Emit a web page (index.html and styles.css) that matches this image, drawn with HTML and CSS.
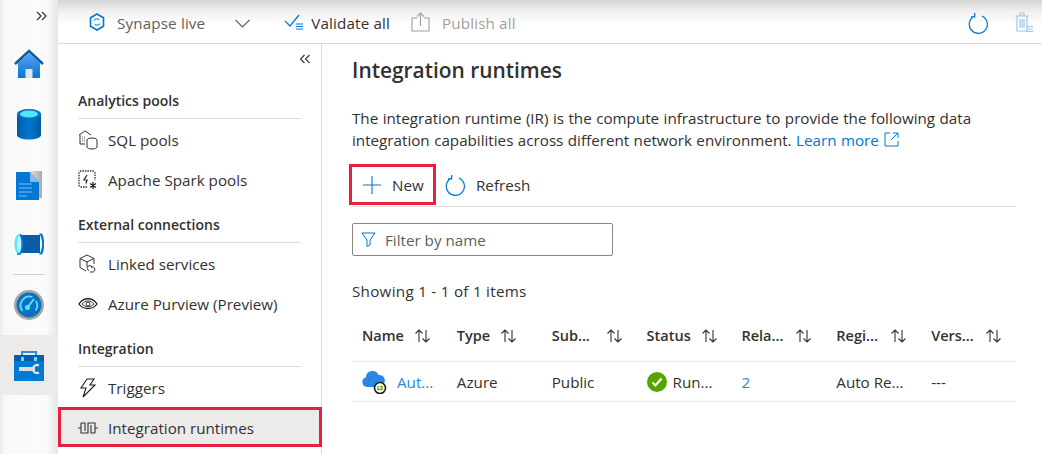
FILE: index.html
```html
<!DOCTYPE html>
<html lang="en">
<head>
  <meta charset="UTF-8" />
  <title>Integration runtimes</title>
  <link rel="stylesheet" href="styles.css">
</head>
<body>
  <svg class="defs" width="0" height="0">
    <defs>
      <linearGradient id="blueV" x1="0" y1="0" x2="0" y2="1"><stop offset="0" stop-color="#5ea0ef"/><stop offset="1" stop-color="#0078d4"/></linearGradient>
      <linearGradient id="blueH" x1="0" y1="0" x2="1" y2="0"><stop offset="0" stop-color="#005ba1"/><stop offset=".5" stop-color="#0078d4"/><stop offset="1" stop-color="#005ba1"/></linearGradient>
      <linearGradient id="grayH" x1="0" y1="0" x2="1" y2="0"><stop offset="0" stop-color="#f0f0f0"/><stop offset="1" stop-color="#a8a8a8"/></linearGradient>
      <symbol id="sort" viewBox="0 0 18 16"><path d="M5 14V2M1.500 5.500 5 2l3.500 3.500M12 2v12M8.500 10.500 12 14l3.500-3.500" fill="none" stroke="#323130" stroke-width="1.100"/></symbol>
      <symbol id="refresh" viewBox="0 0 22 24"><path d="M14.500 4.200A9.500 9.500 0 1 1 6.500 4.500M7 1v4H3" fill="none" stroke="#0078d4" stroke-width="1.300" transform="translate(0 1)"/></symbol>
    </defs>
  </svg>

  <!-- Left rail -->
  <nav class="rail">
    <div class="rail-expand">
      <svg width="12" height="10" viewBox="0 0 12 10"><path d="M1 1l4 4-4 4M6 1l4 4-4 4" fill="none" stroke="#323130" stroke-width="1.200"/></svg>
    </div>
    <div class="rail-item rail-home">
      <svg width="30" height="30" viewBox="0 0 30 30"><path d="M4 14 15 4l11 10v15H4z" fill="url(#blueV)"/><path d="M1 15 15 2l14 13" fill="none" stroke="#0a5a9e" stroke-width="2.400"/><rect x="11.500" y="20" width="7" height="9" fill="#dfe3e6"/></svg>
    </div>
    <div class="rail-item rail-db">
      <svg width="24" height="32" viewBox="0 0 24 32"><path d="M0 6v21c0 2.500 5.400 4.500 12 4.500S24 29.500 24 27V6z" fill="url(#blueH)"/><ellipse cx="12" cy="6" rx="12" ry="5" fill="#0a6fc2"/><ellipse cx="12" cy="6" rx="9" ry="3.500" fill="#50e6ff"/></svg>
    </div>
    <div class="rail-item rail-doc">
      <svg width="26" height="29" viewBox="0 0 26 29"><rect x="12" y="0" width="14" height="27" fill="url(#grayH)"/><path d="M0 1h14l9 10v18H0z" fill="#0078d4"/><path d="M14 1l9 10h-9z" fill="#83b9f9"/><path d="M3 13h13M3 17h13M3 21h13M3 25h8" stroke="#83b9f9" stroke-width="1.200"/></svg>
    </div>
    <div class="rail-item rail-pipe">
      <svg width="30" height="22" viewBox="0 0 30 22"><rect x="4" y="2" width="22" height="18" fill="#0a5ea8"/><ellipse cx="4.500" cy="11" rx="4" ry="9.500" fill="#50e6ff"/><ellipse cx="5" cy="11" rx="2.200" ry="8" fill="#c3f1ff"/><path d="M6 1c3 4 3 16 0 20h-3" fill="none" stroke="#0078d4" stroke-width="1.500"/><path d="M25 .5c4 4 4 17 0 21h3c3-5 3-16 0-21z" fill="#0078d4"/></svg>
    </div>
    <div class="rail-sep"></div>
    <div class="rail-item">
      <svg width="30" height="30" viewBox="0 0 30 30"><circle cx="15" cy="15" r="15" fill="#a6a6a6"/><circle cx="15" cy="15" r="12.500" fill="#0f70c4"/><path d="M8.500 21a9 9 0 0 1 10-14" fill="none" stroke="#50e6ff" stroke-width="1.800"/><path d="M22 11a9 9 0 0 1-.500 9.500" fill="none" stroke="#50e6ff" stroke-width="1.800"/><path d="M13 18l7-9" stroke="#50e6ff" stroke-width="2"/><circle cx="13.500" cy="17.500" r="2.500" fill="#50e6ff"/></svg>
    </div>
    <div class="rail-item rail-active">
      <svg width="30" height="31" viewBox="0 0 30 31"><path d="M8 7V2h14v5" fill="none" stroke="#2f8be0" stroke-width="2"/><rect x="0" y="5" width="30" height="26" fill="#0078d4"/><rect x="0" y="5" width="30" height="6" fill="#0a5ea8"/><rect x="7" y="7" width="3" height="4" fill="#50e6ff"/><rect x="20" y="7" width="3" height="4" fill="#50e6ff"/><path d="M5 19h16" stroke="#e1dfdd" stroke-width="4"/><path d="M25 15.500a4 4 0 1 0 0 7" fill="none" stroke="#e1dfdd" stroke-width="2.200"/></svg>
    </div>
  </nav>

  <div class="page">
    <!-- Top command bar -->
    <header class="topbar">
      <div class="topbar-mode">
        <svg width="16" height="18" viewBox="0 0 16 18"><path d="M8 1l6.500 3.700v8.600L8 17l-6.500-3.700V4.700z" fill="none" stroke="#0078d4" stroke-width="1.600"/><path d="M5 7.500c1-2 4-2 5.500-.8M11 10.500c-1 2-4 2-5.500.8" fill="none" stroke="#50b0e8" stroke-width="1.500"/></svg>
        <span>Synapse live</span>
        <svg class="mode-chevron" width="15" height="9" viewBox="0 0 15 9"><path d="M.5 1l7 7 7-7" fill="none" stroke="#605e5c" stroke-width="1.100"/></svg>
      </div>
      <div class="top-btn">
        <svg width="20" height="16" viewBox="0 0 20 16"><path d="M1 7l5 5L15 1" fill="none" stroke="#0078d4" stroke-width="1.200"/><path d="M12 10h7M12 12.500h7M12 15h7" stroke="#0078d4" stroke-width="1.200"/></svg>
        <span>Validate all</span>
      </div>
      <div class="top-btn top-btn-off">
        <svg width="19" height="20" viewBox="0 0 19 20"><path d="M6 6H1v13h17V6h-5M9.500 14V1M6 4.500 9.500 1 13 4.500" fill="none" stroke="#a19f9d" stroke-width="1.100"/></svg>
        <span>Publish all</span>
      </div>
      <div class="top-right">
        <svg width="21" height="23"><use href="#refresh"/></svg>
        <svg width="18" height="21" viewBox="0 0 18 21"><path d="M0 4h14M5 4V1h4v3M2 4v15h10V4M5 7v9M7 7v9M9 7v9" fill="none" stroke="#9cc8ea" stroke-width="1.200"/><path d="M11 14.500h7M11 17h7M11 19.500h7" stroke="#9cc8ea" stroke-width="1.200"/></svg>
      </div>
    </header>

    <div class="workspace">
      <!-- Manage sidebar -->
      <aside class="sidebar">
        <div class="collapse">
          <svg width="12" height="10" viewBox="0 0 12 10"><path d="M5.500 1l-4 4 4 4M10.500 1l-4 4 4 4" fill="none" stroke="#323130" stroke-width="1.100"/></svg>
        </div>

        <h3 class="group-title">Analytics pools</h3>
        <a class="side-item">
          <svg width="20" height="20" viewBox="0 0 20 20"><path d="M1 5l6-4 6 4M2 5v9h5" fill="none" stroke="#323130"/><path d="M4 7h1M6 7h1M4 9h1M6 9h1M4 11h1M6 11h1" stroke="#605e5c"/><ellipse cx="14" cy="10" rx="5" ry="2" fill="#fff" stroke="#323130"/><path d="M9 10v7c0 1 2 2 5 2s5-1 5-2v-7" fill="#fff" stroke="#323130"/></svg>
          <span>SQL pools</span>
        </a>
        <a class="side-item">
          <svg width="20" height="20" viewBox="0 0 20 20"><path d="M9 17H3a2 2 0 0 1-2-2V3a2 2 0 0 1 2-2h12a2 2 0 0 1 2 2v7" fill="none" stroke="#323130" stroke-width="1.300" stroke-dasharray="1.500 1"/><path d="M9 5 6 10h3l-1 3.500" fill="none" stroke="#201f1e" stroke-width="1.200"/><path d="M15 12v7M12 13.500l6 4M18 13.500l-6 4" stroke="#201f1e" stroke-width="1.300"/></svg>
          <span>Apache Spark pools</span>
        </a>

        <h3 class="group-title">External connections</h3>
        <a class="side-item">
          <svg width="20" height="20" viewBox="0 0 20 20"><path d="M9 1l7 3.500V10M9 1 2 4.500v9L8 17M2 4.500 9 8l7-3.500M9 8v5" fill="none" stroke="#323130"/><path d="M14 13a2.500 2.500 0 1 0-3 3.500M13 13.500a2.500 2.500 0 1 1 1 4.500h-2" fill="none" stroke="#323130"/></svg>
          <span>Linked services</span>
        </a>
        <a class="side-item">
          <svg width="20" height="14" viewBox="0 0 20 14"><path d="M1 7c4-7 14-7 18 0-4 6-14 6-18 0z" fill="none" stroke="#201f1e" stroke-width="1.300"/><path d="M4 7c3-4 9-4 12 0-3 3.500-9 3.500-12 0z" fill="none" stroke="#323130"/><circle cx="10" cy="7" r="2" fill="none" stroke="#323130"/></svg>
          <span>Azure Purview (Preview)</span>
        </a>

        <h3 class="group-title">Integration</h3>
        <a class="side-item">
          <svg width="18" height="20" viewBox="0 0 18 20"><path d="M8 1h7l-4 6h5L4 19l3-9H2z" fill="none" stroke="#201f1e" stroke-width="1.100"/></svg>
          <span>Triggers</span>
        </a>
        <a class="side-item side-item-on">
          <svg width="20" height="14" viewBox="0 0 20 14"><path d="M0 7h3M17 7h3M3 2h4v8M3 2v10h7V5M17 12h-4V4M17 12V2h-7v3" fill="none" stroke="#323130" stroke-width="1.100"/></svg>
          <span>Integration runtimes</span>
        </a>
      </aside>

      <!-- Content -->
      <main class="content">
        <h1 class="title">Integration runtimes</h1>
        <p class="intro">The integration runtime (IR) is the compute infrastructure to provide the following data integration capabilities across different network environment. <a class="link">Learn more</a>
          <svg class="ext" width="15" height="15" viewBox="0 0 15 15"><path d="M6 1H1v13h13V9M9 1h5v5M14 1 7 8" fill="none" stroke="#0078d4"/></svg>
        </p>

        <div class="toolbar">
          <button class="tool tool-new">
            <svg width="20" height="20" viewBox="0 0 20 20"><path d="M10 1v18M1 10h18" stroke="#0078d4" stroke-width="1.100"/></svg>
            <span>New</span>
          </button>
          <button class="tool">
            <svg width="21" height="23"><use href="#refresh"/></svg>
            <span>Refresh</span>
          </button>
        </div>

        <div class="filter">
          <svg width="15" height="15" viewBox="0 0 15 15"><path d="M1 1h13L9 8v5l-3 1.500V8z" fill="none" stroke="#0078d4"/></svg>
          <span>Filter by name</span>
        </div>

        <p class="count">Showing 1 - 1 of 1 items</p>

        <div class="grid grid-head">
          <div class="cell"><span>Name</span><svg width="18" height="16"><use href="#sort"/></svg></div>
          <div class="cell"><span>Type</span><svg width="18" height="16"><use href="#sort"/></svg></div>
          <div class="cell"><span class="cut">Sub...</span><svg width="18" height="16"><use href="#sort"/></svg></div>
          <div class="cell"><span class="cut">Status</span><svg width="18" height="16"><use href="#sort"/></svg></div>
          <div class="cell"><span class="cut">Rela...</span><svg width="18" height="16"><use href="#sort"/></svg></div>
          <div class="cell"><span class="cut">Regi...</span><svg width="18" height="16"><use href="#sort"/></svg></div>
          <div class="cell"><span class="cut">Vers...</span><svg width="18" height="16"><use href="#sort"/></svg></div>
        </div>
        <div class="grid grid-row">
          <div class="cell cell-name">
            <svg width="25" height="24" viewBox="0 0 25 24"><path d="M5 17a5 5 0 0 1-1-9.800A6.500 6.500 0 0 1 16.500 5 5.500 5.500 0 0 1 18 16l-1 1z" fill="#2b88e0"/><circle cx="18" cy="18" r="5.500" fill="#fff" stroke="#201f1e" stroke-width="1.600"/><path d="M16 16v3.500h4v-3h-2" fill="none" stroke="#5db300" stroke-width="1.300"/></svg>
            <a class="link">Aut...</a>
          </div>
          <div class="cell">Azure</div>
          <div class="cell">Public</div>
          <div class="cell cell-status">
            <svg width="20" height="20" viewBox="0 0 20 20"><circle cx="10" cy="10" r="10" fill="#57a300"/><path d="M5.500 10.500 8.500 13.500 14.500 6.500" fill="none" stroke="#fff" stroke-width="2.200"/></svg>
            <span>Run...</span>
          </div>
          <div class="cell"><a class="link">2</a></div>
          <div class="cell">Auto Re...</div>
          <div class="cell">---</div>
        </div>
      </main>
    </div>
  </div>
</body>
</html>
```
FILE: styles.css
```css
/* Reset & basics */
* {
  box-sizing: border-box;
}
body {
  margin: 0;
  width: 1042px;
  height: 454px;
  overflow: hidden;
  display: flex;
  background: #fff;
  color: #323130;
  font-family: "Open Sans", "Noto Sans", sans-serif;
  font-size: 15.2px;
}
.defs {
  position: absolute;
}
svg {
  display: block;
  flex: none;
}

/* Left rail */
.rail {
  width: 58px;
  flex: none;
  display: flex;
  flex-direction: column;
  align-items: stretch;
  background: linear-gradient(90deg, #ececec 0, #f9f9f9 5px, #fbfbfb 46px, #e6e6e6 58px);
}
.rail-expand {
  height: 32px;
  display: flex;
  justify-content: flex-end;
  align-items: center;
  padding-right: 10px;
}
.rail-item {
  height: 60px;
  display: flex;
  justify-content: center;
  align-items: center;
}
.rail-home {
  height: 64px;
}
.rail-db {
  height: 55px;
}
.rail-doc {
  height: 68px;
}
.rail-pipe {
  height: 49px;
}
.rail-sep {
  height: 1px;
  margin: 6px 13px 0;
  background: #d2d0ce;
}
.rail-active {
  background: #edebe9;
}

/* Top command bar */
.page {
  flex: 1;
  min-width: 0;
  display: flex;
  flex-direction: column;
}
.topbar {
  height: 44px;
  flex: none;
  display: flex;
  align-items: center;
  padding: 1px 9px 0 31px;
  border-bottom: 1px solid #dddbd9;
  background: linear-gradient(180deg, #d6d6d6 0, #f1f1f1 12px, #fff 24px);
}
.topbar span {
  padding-top: 1px;
  letter-spacing: .15px;
}
.topbar-mode {
  display: flex;
  align-items: center;
  gap: 12px;
  color: #605e5c;
}
.mode-chevron {
  margin: 2px 34px 0 18px;
}
.top-btn {
  display: flex;
  align-items: center;
  gap: 7px;
  margin-right: 21px;
}
.top-btn-off {
  color: #a19f9d;
  gap: 12px;
}
.top-right {
  margin-left: auto;
  display: flex;
  align-items: center;
  gap: 26px;
}

/* Manage sidebar */
.workspace {
  flex: 1;
  display: flex;
  min-height: 0;
}
.sidebar {
  width: 264px;
  flex: none;
  border-right: 1px solid #dddbd9;
  padding-top: 10px;
}
.collapse {
  display: flex;
  justify-content: flex-end;
  padding-right: 10px;
  height: 21px;
}
.group-title {
  margin: 0 20px;
  height: 44px;
  display: flex;
  align-items: flex-end;
  padding-bottom: 8px;
  border-bottom: 1px solid #dddbd9;
  font-size: 14px;
  font-weight: 600;
}
.side-item {
  height: 40px;
  display: flex;
  align-items: center;
  gap: 10px;
  padding: 2px 0 0 20px;
}
.side-item svg {
  width: 20px;
}
.side-item-on {
  margin-right: -1px;
  background: #edebe9;
  outline: 3px solid #e81f3e;
  outline-offset: -3px;
}

/* Content */
.content {
  flex: 1;
  min-width: 0;
  padding: 0 26px 0 30px;
}
.title {
  margin: 12px 0 0;
  font-size: 20.9px;
  line-height: 28px;
  font-weight: 600;
}
.intro {
  margin: 23px 0 0;
  line-height: 22px;
  word-spacing: .5px;
}
.link {
  color: #0078d4;
}
.ext {
  display: inline-block;
  vertical-align: -1px;
  margin-left: 1px;
}
.toolbar {
  display: flex;
  align-items: flex-start;
  height: 43px;
  margin-top: 13px;
  border-bottom: 1px solid #dddbd9;
}
.tool {
  height: 41px;
  display: flex;
  align-items: center;
  gap: 10px;
  padding: 0 9px;
  border: 0;
  background: none;
  color: #323130;
  font: inherit;
}
.tool-new {
  width: 87px;
  margin-left: -3px;
  padding-left: 10px;
  border: 3px solid #e81f3e;
}
.filter {
  width: 261px;
  height: 33px;
  margin-top: 16px;
  display: flex;
  align-items: center;
  gap: 9px;
  padding-left: 8px;
  border: 1px solid #8a8886;
  border-radius: 2px;
  color: #605e5c;
}
.count {
  margin: 24px 0 0;
  line-height: 22px;
  letter-spacing: .28px;
}

/* Table */
.grid {
  display: grid;
  grid-template-columns: repeat(7, 1fr);
  border-bottom: 1px solid #edebe9;
}
.grid-head {
  height: 48px;
  margin-top: 12px;
  padding-bottom: 4px;
  font-size: 14.5px;
  font-weight: 600;
}
.grid-row {
  height: 40px;
}
.grid-row .link {
  color: #2b88d8;
}
.cell {
  display: flex;
  align-items: center;
  gap: 10px;
  padding-left: 10px;
  white-space: nowrap;
}
.cut {
  width: 44px;
}
.cell-name {
  gap: 10px;
}
.cell-status {
  gap: 6px;
}
```
